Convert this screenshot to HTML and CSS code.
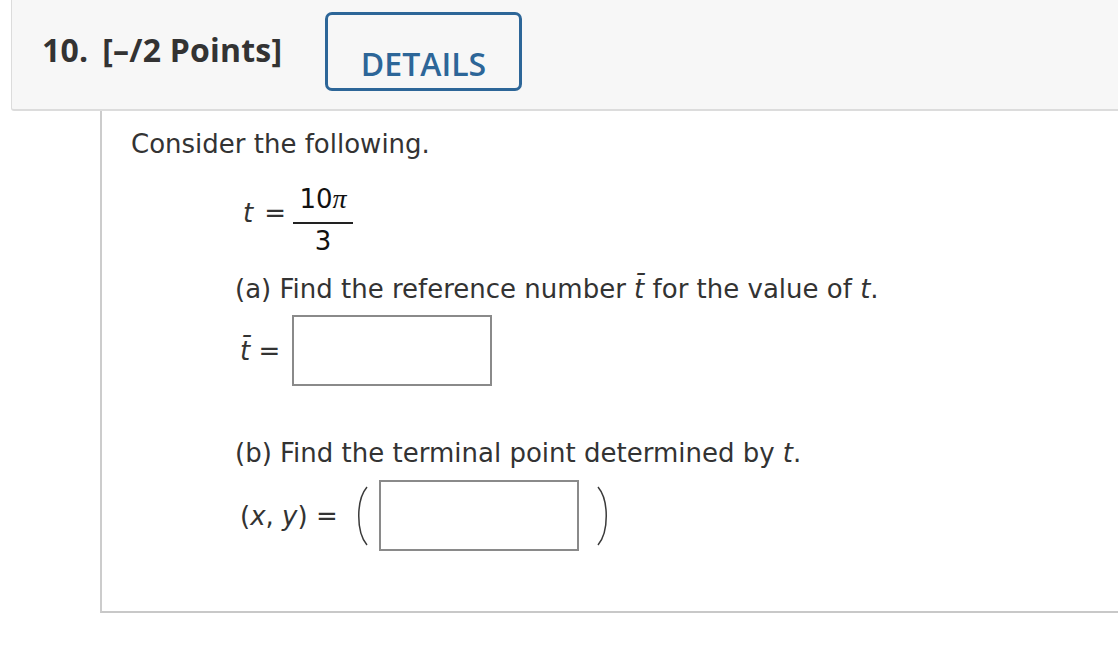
FILE: index.html
```html
<!DOCTYPE html>
<html>
<head>
<meta charset="utf-8">
<link rel="stylesheet" href="styles.css">
</head>
<body>
<div class="header">
  <div class="title"><span class="num">10.</span><span class="pts">[–/2 Points]</span></div>
  <div class="details">DETAILS</div>
</div>
<div class="content">
  <p class="intro">Consider the following.</p>
  <div class="eq">
    <span class="lhs"><span class="var">t</span><span class="eqs">=</span></span>
    <span class="frac"><span class="numer">10<span class="pi">π</span></span><span class="denom">3</span></span>
  </div>
  <p class="q qa">(a) Find the reference number <span class="var">t&#772;</span> for the value of <span class="var">t</span>.</p>
  <div class="ans ans-a">
    <span class="lbl"><span class="var">t&#772;</span> =</span>
    <span class="box"></span>
  </div>
  <p class="q qb">(b) Find the terminal point determined by <span class="var">t</span>.</p>
  <div class="ans ans-b">
    <span class="lbl">(<span class="var">x</span>, <span class="var">y</span>) =</span>
    <svg class="paren pl" width="16" height="60" viewBox="0 0 16 60"><path d="M14 1 C3 14 3 46 14 59" fill="none" stroke="#3a3a3a" stroke-width="1.5"/></svg>
    <span class="box"></span>
    <svg class="paren pr" width="16" height="60" viewBox="0 0 16 60"><path d="M2 1 C13 14 13 46 2 59" fill="none" stroke="#3a3a3a" stroke-width="1.5"/></svg>
  </div>
</div>
</body>
</html>
```
FILE: styles.css
```css
html, body {
  margin: 0;
  padding: 0;
  background: #fff;
}
body {
  width: 1118px;
  height: 666px;
  overflow: hidden;
}
.header {
  margin-left: 11px;
  height: 109px;
  background: #f7f7f7;
  border-left: 1px solid #dcdcdc;
  border-bottom: 2px solid #dcdcdc;
  border-bottom-left-radius: 3px;
  display: flex;
  align-items: flex-start;
}
.title {
  font-family: "Open Sans", sans-serif;
  font-weight: 700;
  font-size: 32px;
  color: #333;
  margin-left: 30px;
  margin-top: 30px;
  width: 253px;
  flex: none;
  line-height: 40px;
  letter-spacing: 0.2px;
  white-space: nowrap;
}
.num {
  margin-right: 14px;
}
.details {
  margin-left: 30px;
  margin-top: 12px;
  width: 191px;
  height: 69px;
  border: 3px solid #2d6698;
  border-radius: 7px;
  color: #2d6698;
  font-family: "Open Sans", sans-serif;
  font-weight: 600;
  font-size: 32px;
  line-height: 40px;
  display: flex;
  align-items: flex-end;
  justify-content: center;
  padding-bottom: 4px;
  box-sizing: content-box;
}
.content {
  margin-left: 100px;
  height: 482px;
  border-left: 2px solid #cccccc;
  border-bottom: 2px solid #c8c8c8;
  font-family: "DejaVu Sans", Verdana, sans-serif;
  font-size: 26px;
  color: #333;
  padding-left: 29px;
  padding-top: 18px;
}
.intro {
  margin: 0;
  line-height: 30px;
}
.var {
  font-style: italic;
}
.eq {
  margin-left: 112px;
  margin-top: 25px;
  display: flex;
  align-items: flex-start;
}
.lhs {
  margin-top: 14px;
  line-height: 30px;
  display: flex;
}
.eqs {
  margin: 0 7px 0 11px;
}
.frac {
  display: flex;
  flex-direction: column;
  align-items: center;
  width: 60px;
}
.numer {
  color: #111;
  border-bottom: 2px solid #222;
  width: 60px;
  text-align: center;
  line-height: 30px;
  padding-bottom: 8px;
}
.pi {
  font-family: "Liberation Serif", serif;
  font-style: italic;
  font-size: 28px;
}
.denom {
  color: #111;
  line-height: 30px;
  padding-top: 2px;
}
.q {
  margin: 0;
  margin-left: 104px;
  line-height: 30px;
}
.qa {
  margin-top: 18px;
}
.ans {
  display: flex;
  align-items: center;
  margin-left: 109px;
}
.ans-a {
  margin-top: 11px;
}
.ans-a .lbl {
  width: 52px;
}
.box {
  display: block;
  width: 196px;
  height: 67px;
  border: 2px solid #8a8a8a;
  background: #fff;
  flex: none;
}
.qb {
  margin-top: 52px;
}
.ans-b {
  margin-top: 12px;
}
.ans-b .lbl {
  width: 113px;
  white-space: nowrap;
}
.paren {
  display: block;
  flex: none;
}
.pl {
  margin-right: 10px;
}
.pr {
  margin-left: 17px;
}
```
